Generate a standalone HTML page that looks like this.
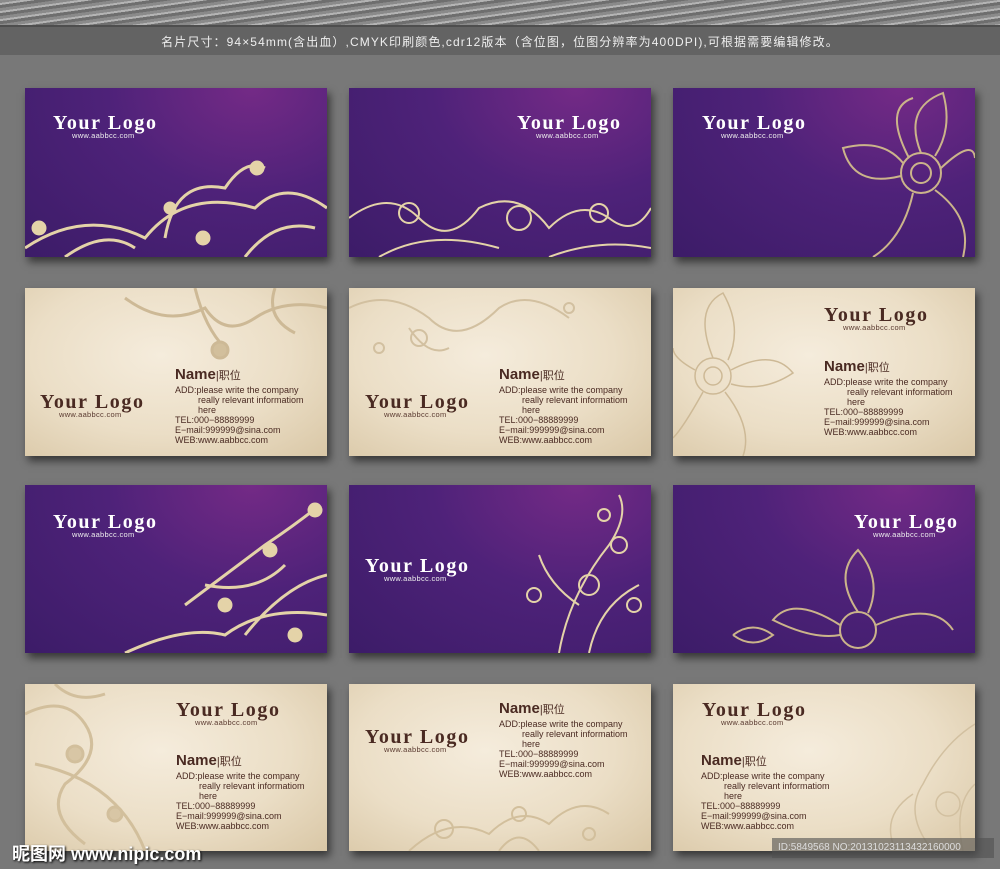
<!DOCTYPE html>
<html><head><meta charset="utf-8"><style>
*{margin:0;padding:0;box-sizing:border-box}
body{width:1000px;height:869px;background:#787878;position:relative;overflow:hidden;font-family:"Liberation Sans","Noto Sans CJK SC",sans-serif}
.top{position:absolute;left:0;top:0;width:1000px;height:27px;background:repeating-linear-gradient(172deg,#8a8a8a 0 3px,#b4b4b4 3px 5px,#6e6e6e 5px 8px);border-bottom:2px solid #4e4e4e}
.band{position:absolute;left:0;top:27px;width:1000px;height:28px;background:#636363;color:#eee;font-size:12px;text-align:center;line-height:30px;letter-spacing:1.1px}
.c{position:absolute;width:302px;height:169px;box-shadow:3px 5px 8px rgba(0,0,0,.55);overflow:hidden}
.p{background:radial-gradient(ellipse at 75% 0%,#742a86 0%,#4e2279 45%,#3c1c68 100%)}
.k{background:radial-gradient(ellipse at 45% 40%,#f5ecdc 0%,#ebdec6 55%,#d9c7a6 100%)}
.lg{position:absolute;font-family:"Liberation Serif",serif;font-weight:bold;font-size:20px;letter-spacing:1.6px;white-space:nowrap}
.lg i{display:block;font-style:normal;font-family:"Liberation Sans",sans-serif;font-weight:normal;font-size:7.5px;letter-spacing:.3px;margin:-4px 0 0 19px}
.p .lg{color:#fff}.p .lg i{color:#eee}
.k .lg{color:#4a2a22}.k .lg i{color:#5a3a30}
.nm{position:absolute;color:#4a2a22;font-size:9px;line-height:9.9px;white-space:nowrap}
.nm b{font-size:15px;line-height:20px;display:block}
.nm b span{font-size:11px;font-weight:normal}
.nm .in{padding-left:23px;display:block}
svg{position:absolute}
.wm{position:absolute;left:12px;top:840px;color:#fff;font-size:18px;font-weight:bold;text-shadow:1px 1px 2px #000}
.id{position:absolute;left:772px;top:838px;width:222px;height:20px;background:rgba(80,80,80,.6);color:#ddd;font-size:10px;line-height:20px;padding-left:6px}
</style></head><body>
<div class="top"></div>
<div class="band">名片尺寸：94×54mm(含出血）,CMYK印刷颜色,cdr12版本（含位图，位图分辨率为400DPI),可根据需要编辑修改。</div>

<div class="c p" style="left:25px;top:88px">
<div class="lg" style="left:28px;top:24px">Your Logo<i>www.aabbcc.com</i></div>
<svg width="302" height="169" fill="none" stroke="#e4d3a8" stroke-width="3"><path d="M0 160 Q60 120 120 150 Q160 100 230 120 Q260 90 302 120"/><path d="M140 150 Q150 90 200 100 Q220 70 240 80"/><circle cx="14" cy="140" r="6" fill="#e4d3a8"/><circle cx="178" cy="150" r="6" fill="#e4d3a8"/><circle cx="145" cy="120" r="5" fill="#e4d3a8"/><circle cx="232" cy="80" r="6" fill="#e4d3a8"/><path d="M40 169 Q80 140 110 160 M220 169 Q250 130 290 140"/></svg>
</div>
<div class="c p" style="left:349px;top:88px">
<div class="lg" style="left:168px;top:24px">Your Logo<i>www.aabbcc.com</i></div>
<svg width="302" height="169" fill="none" stroke="#e4d3a8" stroke-width="2"><path d="M0 130 Q40 100 70 130 Q100 160 130 120 Q170 100 200 140 Q230 110 260 130 Q285 150 302 120"/><circle cx="60" cy="125" r="10"/><circle cx="170" cy="130" r="12"/><circle cx="250" cy="125" r="9"/><path d="M30 169 Q80 140 150 160 M200 169 Q250 150 302 160"/></svg>
</div>
<div class="c p" style="left:673px;top:88px">
<div class="lg" style="left:29px;top:24px">Your Logo<i>www.aabbcc.com</i></div>
<svg width="302" height="169" fill="none" stroke="#cbb48a" stroke-width="2"><circle cx="248" cy="85" r="20"/><circle cx="248" cy="85" r="10"/><path d="M248 65 Q230 20 270 5 Q280 40 262 68 M268 80 Q300 50 302 70 M262 102 Q300 130 290 169 M240 105 Q230 150 200 169 M228 88 Q180 100 170 60 Q210 50 230 75 M236 70 Q210 20 240 10"/></svg>
</div>

<div class="c k" style="left:25px;top:288px;height:168px">
<svg width="302" height="168" fill="none" stroke="#cdb996" stroke-width="3"><path d="M100 10 Q140 40 180 20 Q200 50 230 30 Q260 10 302 20 M170 0 Q180 40 200 60 M250 0 Q240 30 270 45"/><circle cx="195" cy="62" r="8" fill="#d2bf9c"/></svg>
<div class="lg" style="left:15px;top:103px">Your Logo<i>www.aabbcc.com</i></div>
<div class="nm" style="left:150px;top:77px"><b>Name<span>|职位</span></b>ADD:please write the company<span class="in">really relevant informatiom</span><span class="in">here</span>TEL:000−88889999<br>E−mail:999999@sina.com<br>WEB:www.aabbcc.com</div>
</div>
<div class="c k" style="left:349px;top:288px;height:168px">
<svg width="302" height="168" fill="none" stroke="#d2c0a0" stroke-width="2"><path d="M0 20 Q40 0 80 30 Q110 60 150 20 Q180 0 220 30 M60 40 Q80 70 100 60"/><circle cx="70" cy="50" r="8"/><circle cx="30" cy="60" r="5"/><circle cx="220" cy="20" r="5"/></svg>
<div class="lg" style="left:16px;top:103px">Your Logo<i>www.aabbcc.com</i></div>
<div class="nm" style="left:150px;top:77px"><b>Name<span>|职位</span></b>ADD:please write the company<span class="in">really relevant informatiom</span><span class="in">here</span>TEL:000−88889999<br>E−mail:999999@sina.com<br>WEB:www.aabbcc.com</div>
</div>
<div class="c k" style="left:673px;top:288px;height:168px">
<svg width="302" height="168" fill="none" stroke="#cdb996" stroke-width="1.5"><circle cx="40" cy="88" r="18"/><circle cx="40" cy="88" r="9"/><path d="M40 70 Q20 20 50 5 Q70 40 55 72 M58 82 Q100 60 120 85 Q90 105 58 96 M52 104 Q80 140 70 168 M30 104 Q10 140 0 150 M22 82 Q0 70 0 60"/></svg>
<div class="lg" style="left:151px;top:16px">Your Logo<i>www.aabbcc.com</i></div>
<div class="nm" style="left:151px;top:69px"><b>Name<span>|职位</span></b>ADD:please write the company<span class="in">really relevant informatiom</span><span class="in">here</span>TEL:000−88889999<br>E−mail:999999@sina.com<br>WEB:www.aabbcc.com</div>
</div>

<div class="c p" style="left:25px;top:485px;height:168px">
<div class="lg" style="left:28px;top:26px">Your Logo<i>www.aabbcc.com</i></div>
<svg width="302" height="168" fill="none" stroke="#e4d3a8" stroke-width="3"><path d="M100 168 Q160 140 200 150 Q240 120 302 130 M160 120 Q200 90 240 60 Q270 40 295 20 M180 100 Q230 110 260 80 M220 150 Q260 100 302 90"/><circle cx="245" cy="65" r="6" fill="#e4d3a8"/><circle cx="200" cy="120" r="6" fill="#e4d3a8"/><circle cx="290" cy="25" r="6" fill="#e4d3a8"/><circle cx="270" cy="150" r="6" fill="#e4d3a8"/></svg>
</div>
<div class="c p" style="left:349px;top:485px;height:168px">
<div class="lg" style="left:16px;top:70px">Your Logo<i>www.aabbcc.com</i></div>
<svg width="302" height="168" fill="none" stroke="#e4d3a8" stroke-width="2"><path d="M210 168 Q220 110 260 60 Q280 30 270 10 M240 168 Q250 120 290 100 M230 120 Q200 100 190 70"/><circle cx="240" cy="100" r="10"/><circle cx="270" cy="60" r="8"/><circle cx="185" cy="110" r="7"/><circle cx="255" cy="30" r="6"/><circle cx="285" cy="120" r="7"/></svg>
</div>
<div class="c p" style="left:673px;top:485px;height:168px">
<div class="lg" style="left:181px;top:26px">Your Logo<i>www.aabbcc.com</i></div>
<svg width="302" height="168" fill="none" stroke="#cbb48a" stroke-width="2"><circle cx="185" cy="145" r="18"/><path d="M185 127 Q160 90 185 65 Q210 95 195 128 M203 140 Q260 115 280 145 M167 140 Q120 110 100 135 Q140 155 167 150 M60 150 Q80 135 100 150 Q80 165 60 150"/></svg>
</div>

<div class="c k" style="left:25px;top:684px;height:167px">
<svg width="302" height="167" fill="none" stroke="#d2bf9c" stroke-width="3"><path d="M0 30 Q40 10 60 40 Q80 70 40 100 Q20 130 60 160 M10 80 Q60 90 90 120 Q110 140 120 167 M30 0 Q50 20 80 10"/><circle cx="50" cy="70" r="8" fill="#d8c6a5"/><circle cx="90" cy="130" r="7" fill="#d8c6a5"/></svg>
<div class="lg" style="left:151px;top:15px">Your Logo<i>www.aabbcc.com</i></div>
<div class="nm" style="left:151px;top:67px"><b>Name<span>|职位</span></b>ADD:please write the company<span class="in">really relevant informatiom</span><span class="in">here</span>TEL:000−88889999<br>E−mail:999999@sina.com<br>WEB:www.aabbcc.com</div>
</div>
<div class="c k" style="left:349px;top:684px;height:167px">
<svg width="302" height="167" fill="none" stroke="#d2bf9c" stroke-width="2"><path d="M60 167 Q100 130 140 150 Q170 120 200 140 Q230 110 260 130 M150 167 Q170 140 190 167"/><circle cx="95" cy="145" r="9"/><circle cx="170" cy="130" r="7"/><circle cx="240" cy="150" r="6"/></svg>
<div class="lg" style="left:16px;top:42px">Your Logo<i>www.aabbcc.com</i></div>
<div class="nm" style="left:150px;top:15px"><b>Name<span>|职位</span></b>ADD:please write the company<span class="in">really relevant informatiom</span><span class="in">here</span>TEL:000−88889999<br>E−mail:999999@sina.com<br>WEB:www.aabbcc.com</div>
</div>
<div class="c k" style="left:673px;top:684px;height:167px">
<svg width="302" height="167" fill="none" stroke="#d2c0a0" stroke-width="1.5"><path d="M302 40 Q270 60 250 100 Q230 130 260 167 M302 100 Q280 120 290 167 M240 110 Q210 130 220 160"/><circle cx="275" cy="120" r="12"/></svg>
<div class="lg" style="left:29px;top:15px">Your Logo<i>www.aabbcc.com</i></div>
<div class="nm" style="left:28px;top:67px"><b>Name<span>|职位</span></b>ADD:please write the company<span class="in">really relevant informatiom</span><span class="in">here</span>TEL:000−88889999<br>E−mail:999999@sina.com<br>WEB:www.aabbcc.com</div>
</div>

<div class="wm">昵图网 www.nipic.com</div>
<div class="id">ID:5849568 NO:20131023113432160000</div>
</body></html>
